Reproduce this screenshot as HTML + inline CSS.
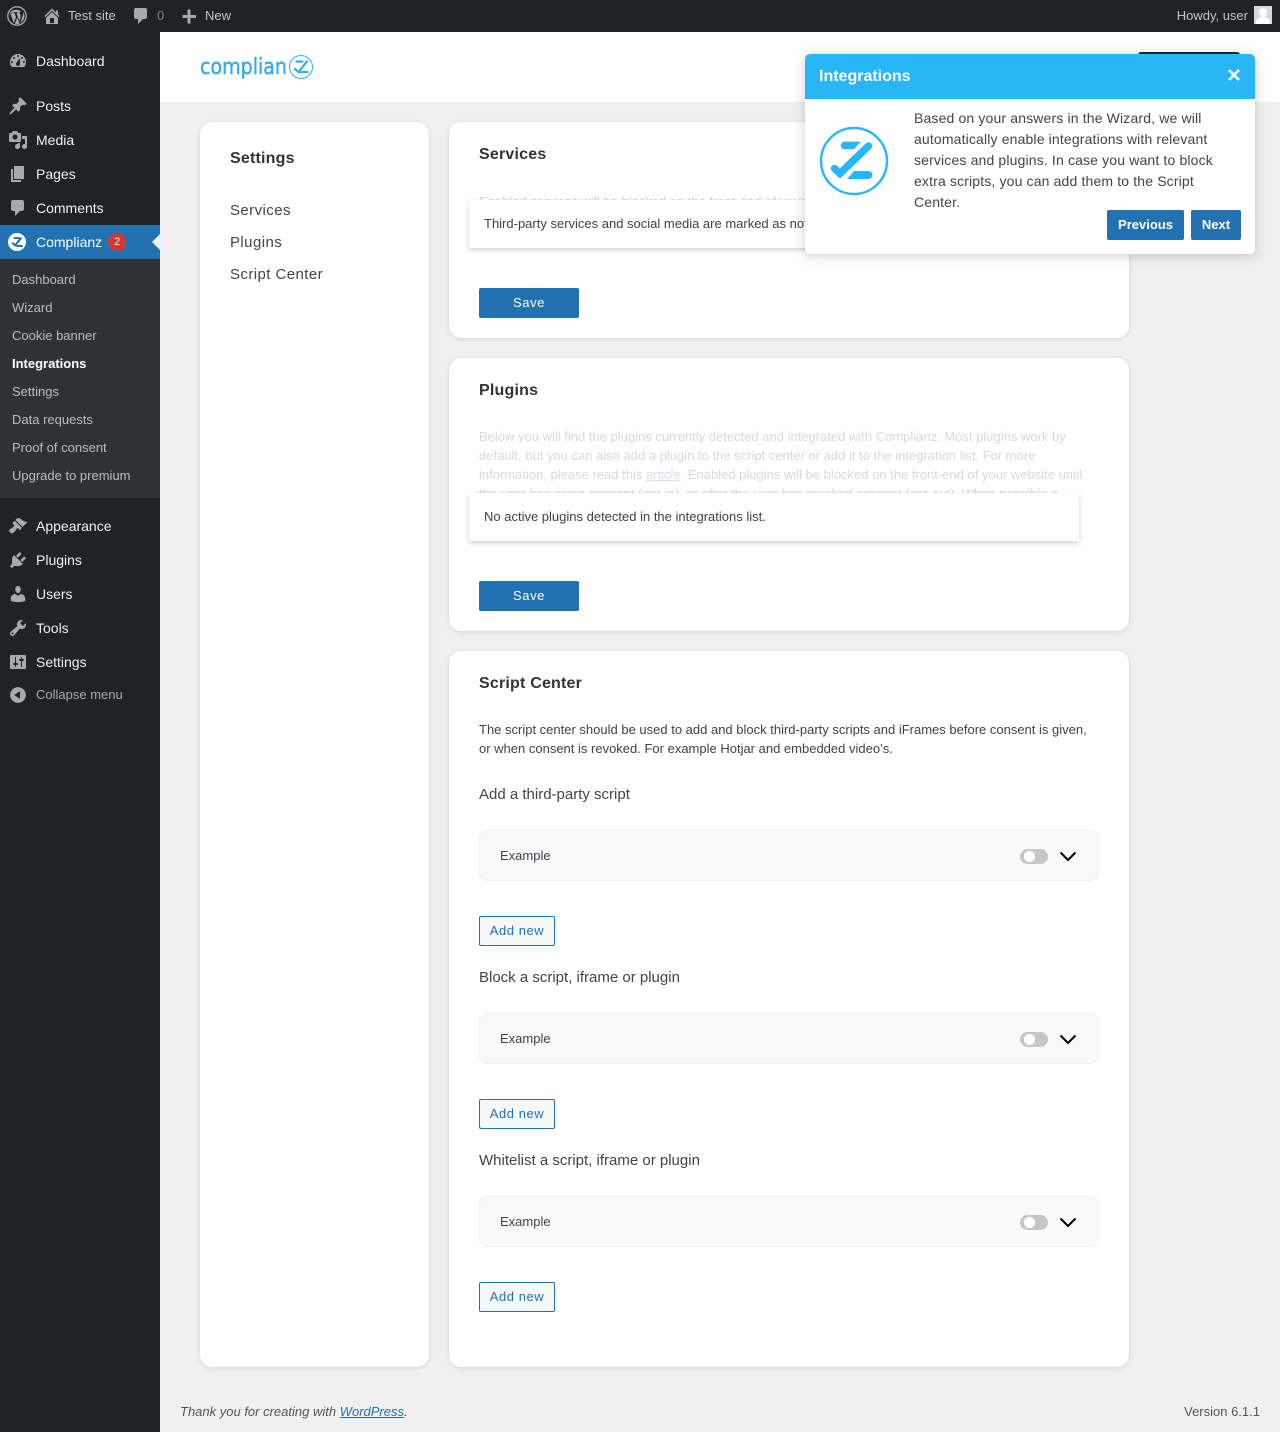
<!DOCTYPE html>
<html lang="en">
<head>
<meta charset="utf-8">
<title>Complianz Integrations</title>
<style>
*{box-sizing:border-box}
html,body{margin:0;padding:0}
body{width:1280px;height:1432px;position:relative;overflow:hidden;background:#f0f0f1;font-family:"Liberation Sans",sans-serif;font-size:13px;color:#3c434a}
.a{position:absolute;white-space:nowrap}
#bar{position:absolute;left:0;top:0;width:1280px;height:32px;background:#1d2327;z-index:5}
#bar .a{color:#c3c4c7;font-size:13px;line-height:32px;top:0}
#side{position:absolute;left:0;top:32px;width:160px;height:1400px;background:#1d2327}
.m{position:absolute;left:36px;color:#f0f0f1;font-size:14px;line-height:18px;white-space:nowrap}
.s{position:absolute;left:12px;color:rgba(240,246,252,.7);font-size:13px;line-height:18px;white-space:nowrap}
.ic{position:absolute;left:8px;width:20px;height:20px;fill:#a7aaad}
.card{position:absolute;background:#fff;border-radius:12px;box-shadow:0 1px 5px rgba(0,0,0,.12);overflow:hidden}
.h{position:absolute;font-size:16px;font-weight:700;color:#333;line-height:20px;white-space:nowrap;letter-spacing:.2px}
.nav{position:absolute;left:230px;font-size:15px;letter-spacing:.42px;color:#444;line-height:20px;z-index:1}
.p{position:absolute;font-size:13px;line-height:19px;white-space:nowrap}
.save{position:absolute;left:30px;width:100px;height:30px;border-radius:2px;background:#2271b1;color:#fff;font-size:13px;letter-spacing:.6px;line-height:30px;text-align:center}
.notice{position:absolute;left:20px;width:610px;height:48px;background:#fff;box-shadow:0 2px 5px rgba(0,0,0,.18);font-size:13px;line-height:48px;padding-left:15px;color:#3c434a;white-space:nowrap;overflow:hidden}
.sub{position:absolute;left:30px;font-size:15px;line-height:20px;color:#444;white-space:nowrap}
.row{position:absolute;left:30px;width:620px;height:51px;background:#f9f9f9;border:1px solid #f2f2f2;border-radius:8px}
.row span{position:absolute;left:20px;top:16px;font-size:13px;line-height:18px;color:#3c434a}
.tg{position:absolute;left:540px;top:18px;width:28px;height:15px;border-radius:8px;background:#c6c6c6}
.tg i{position:absolute;left:4px;top:2px;width:11px;height:11px;border-radius:50%;background:#fff}
.row svg{position:absolute;left:579px;top:20px;width:18px;height:11px}
.add{position:absolute;left:30px;width:76px;height:30px;border:1px solid #2271b1;border-radius:2px;background:#f6f7f7;color:#2271b1;font-size:13px;letter-spacing:.55px;line-height:28px;text-align:center}
#tour{position:absolute;left:805px;top:54px;width:450px;height:200px;background:#fff;border-radius:5px;box-shadow:0 2px 12px rgba(0,0,0,.2);z-index:4}
#tour .top{position:absolute;left:0;top:0;width:450px;height:45px;background:#29b6f6;border-radius:5px 5px 0 0;color:#fff;font-size:16px;font-weight:700;line-height:44px;padding-left:14px;padding-top:1px}
#tour .txt{position:absolute;left:109px;top:54px;width:325px;font-size:14px;line-height:21px;color:#444;letter-spacing:.15px}
.btn{position:absolute;top:156px;height:30px;background:#2271b1;color:#fff;font-size:13px;font-weight:700;line-height:30px;text-align:center;border-radius:2px}
</style>
</head>
<body>

<div id="bar">
  <svg style="position:absolute;left:7px;top:6px" width="20" height="20" viewBox="0 0 20 20"><circle cx="10" cy="10" r="9.2" fill="none" stroke="#a7aaad" stroke-width="1.3"/><path fill="#a7aaad" d="M3.2 7.2l3.6 9.9 2.2-6.2-1.5-3.9-1.1-.1v-.8h4.3v.8l-1.1.1 2.8 8.1.9-3c.7-2 .3-3-.3-4-.4-.6-.6-1.2-.1-2 .3-.4.7-.6 1.2-.6-1.5-1.200-3.200-1.800-5.100-1.700-2.700.1-4.900 1.400-6.300 3.400h2.400v.8l-2.700.2zM10.200 11.500l-2.300 6.300c.7.2 1.500.3 2.200.3.900 0 1.700-.2 2.500-.4zM16.300 6.200c.1 1.400-.2 2.600-.6 3.700l-2.300 6.800c2.600-1.500 4.300-4.500 4-7.500-.1-1.100-.5-2.100-1.100-3z"/></svg>
  <svg style="position:absolute;left:42px;top:6px" width="20" height="20" viewBox="0 0 20 20" fill="#a7aaad"><path fill-rule="evenodd" d="M16 8.500l1.530 1.530-1.060 1.060L10 4.620l-6.470 6.470-1.060-1.060L10 2.500l4 4v-2h2v4zM10 6.040l6 5.990V18H4v-5.970zM12 17v-5H8v5h4z"/></svg>
  <div class="a" style="left:68px">Test site</div>
  <svg style="position:absolute;left:131px;top:6px" width="20" height="20" viewBox="0 0 20 20" fill="#a7aaad"><path d="M5 2h9c1.100 0 2 .9 2 2v7c0 1.100-.9 2-2 2h-2l-5 5v-5H5c-1.100 0-2-.9-2-2V4c0-1.100.9-2 2-2z"/></svg>
  <div class="a" style="left:157px;color:#7e8288">0</div>
  <svg style="position:absolute;left:179px;top:6px" width="20" height="20" viewBox="0 0 20 20" fill="#a7aaad"><path d="M17 9v3h-5.500v5.500h-3V12H3.500V9h5V3.500h3V9z"/></svg>
  <div class="a" style="left:205px">New</div>
  <div class="a" style="right:32px">Howdy, user</div>
  <div style="position:absolute;left:1254px;top:6px;width:18px;height:18px;background:#d8d8d8;overflow:hidden"><div style="position:absolute;left:5px;top:2px;width:8px;height:9px;border-radius:50%;background:#fff"></div><div style="position:absolute;left:2px;top:11px;width:14px;height:9px;border-radius:6px 6px 0 0;background:#fff"></div></div>
</div>

<div id="side">
  <svg class="ic" style="top:19px" viewBox="0 0 20 20"><path fill-rule="evenodd" d="M3.760 16h12.480c1.100-1.370 1.760-3.110 1.760-5 0-4.420-3.580-8-8-8s-8 3.580-8 8c0 1.890.66 3.630 1.760 5zM10 4c.55 0 1 .45 1 1s-.45 1-1 1-1-.45-1-1 .45-1 1-1zM6 6c.55 0 1 .45 1 1s-.45 1-1 1-1-.45-1-1 .45-1 1-1zm8 0c.55 0 1 .45 1 1s-.45 1-1 1-1-.45-1-1 .45-1 1-1zm-5.370 5.550L12 7v6c0 1.100-.9 2-2 2s-2-.9-2-2c0-.57.24-1.080.63-1.450zM4 10c.55 0 1 .45 1 1s-.45 1-1 1-1-.45-1-1 .45-1 1-1zm12 0c.55 0 1 .45 1 1s-.45 1-1 1-1-.45-1-1 .45-1 1-1z"/></svg>
  <div class="m" style="top:20px">Dashboard</div>

  <svg class="ic" style="top:64px" viewBox="0 0 20 20"><path d="M10.440 3.020l1.820-1.820 6.360 6.350-1.830 1.820c-1.050-.68-2.480-.57-3.410.36l-.75.75c-.92.93-1.040 2.350-.35 3.410l-1.830 1.820-2.410-2.410-2.800 2.790c-.42.42-3.380 2.710-3.800 2.290s1.860-3.390 2.280-3.810l2.790-2.790L4.100 9.360l1.830-1.820c1.050.69 2.480.57 3.400-.36l.75-.75c.93-.92 1.050-2.350.36-3.410z"/></svg>
  <div class="m" style="top:65px">Posts</div>

  <svg class="ic" style="top:98px" viewBox="0 0 20 20"><path fill-rule="evenodd" d="M13 11V4c0-.55-.45-1-1-1h-1.670L9 1H5L3.670 3H2c-.55 0-1 .45-1 1v7c0 .55.45 1 1 1h10c.55 0 1-.45 1-1zM7 4.500c1.380 0 2.500 1.120 2.500 2.500S8.380 9.500 7 9.500 4.500 8.380 4.500 7 5.620 4.500 7 4.500zM14 6h5v10.500c0 1.380-1.120 2.500-2.500 2.500S14 17.880 14 16.500s1.120-2.500 2.500-2.500c.17 0 .34.02.5.05V9h-3V6zm-4 8.050V13h2v3.500c0 1.380-1.120 2.500-2.500 2.500S7 17.880 7 16.500 8.120 14 9.500 14c.17 0 .34.02.5.05z"/></svg>
  <div class="m" style="top:99px">Media</div>

  <svg class="ic" style="top:132px" viewBox="0 0 20 20"><path d="M6 15V2h10v13H6zm-1 1h8v2H3V5h2v11z"/></svg>
  <div class="m" style="top:133px">Pages</div>

  <svg class="ic" style="top:166px" viewBox="0 0 20 20"><path d="M5 2h9c1.100 0 2 .9 2 2v7c0 1.100-.9 2-2 2h-2l-5 5v-5H5c-1.100 0-2-.9-2-2V4c0-1.100.9-2 2-2z"/></svg>
  <div class="m" style="top:167px">Comments</div>

  <div style="position:absolute;left:0;top:193px;width:160px;height:34px;background:#2271b1"></div>
  <div style="position:absolute;left:152px;top:202px;width:0;height:0;border-top:8px solid transparent;border-bottom:8px solid transparent;border-right:8px solid #f0f0f1"></div>
  <svg style="position:absolute;left:8px;top:201px" width="18" height="18" viewBox="0 0 18 18"><circle cx="9" cy="9" r="9" fill="#fff"/><path d="M6.500 5h4.500M13 5.300L7 12.300 4.800 10.300M9 13h5" fill="none" stroke="#2271b1" stroke-width="2" stroke-linecap="round"/></svg>
  <div class="m" style="top:201px;color:#fff">Complianz</div>
  <div style="position:absolute;left:108px;top:201px;width:18px;height:18px;border-radius:50%;background:#d63638;color:#fff;font-size:11px;line-height:18px;text-align:center">2</div>

  <div style="position:absolute;left:0;top:227px;width:160px;height:239px;background:#2c3338"></div>
  <div class="s" style="top:239px">Dashboard</div>
  <div class="s" style="top:267px">Wizard</div>
  <div class="s" style="top:295px">Cookie banner</div>
  <div class="s" style="top:323px;color:#fff;font-weight:700">Integrations</div>
  <div class="s" style="top:351px">Settings</div>
  <div class="s" style="top:379px">Data requests</div>
  <div class="s" style="top:407px">Proof of consent</div>
  <div class="s" style="top:435px">Upgrade to premium</div>

  <svg class="ic" style="top:484px" viewBox="0 0 20 20"><path d="M14.480 11.060L7.410 3.990l1.500-1.500c.5-.56 2.300-.47 3.510.32 1.210.8 1.430 1.280 2.910 2.100 1.180.64 2.450 1.260 4.450.85zm-.71.71L6.700 4.700 4.930 6.470c-.39.39-.39 1.020 0 1.410l1.060 1.060c.39.39.39 1.030 0 1.420-.6.6-1.430 1.110-2.210 1.690-.35.26-.7.53-1.010.84C1.430 13.230.4 14.840 2.010 16.450c1.600 1.600 3.210.57 4.560-.77.31-.31.58-.66.84-1.010.58-.78 1.090-1.610 1.690-2.210.39-.39 1.020-.39 1.410 0l1.060 1.060c.39.39 1.020.39 1.410 0z"/></svg>
  <div class="m" style="top:485px">Appearance</div>

  <svg class="ic" style="top:518px" viewBox="0 0 20 20"><path d="M13.110 4.360L9.870 7.600 8 5.730l3.240-3.240c.35-.34 1.050-.2 1.560.32.52.51.66 1.210.31 1.550zm-8 1.770l.91-1.120 9.010 9.010-1.190.84c-.71.71-2.630 1.160-3.820 1.160H6.140L4.900 17.260c-.59.59-1.540.59-2.120 0-.59-.58-.59-1.530 0-2.120l1.240-1.240v-3.880c0-1.130.4-3.190 1.090-3.890zm7.260 3.970l3.240-3.240c.34-.35 1.040-.21 1.550.31.52.51.66 1.210.31 1.550l-3.240 3.250z"/></svg>
  <div class="m" style="top:519px">Plugins</div>

  <svg class="ic" style="top:552px" viewBox="0 0 20 20"><path d="M10 9.250c-2.270 0-2.730-3.440-2.730-3.440C7 4.020 7.820 2 9.970 2c2.160 0 2.980 2.020 2.710 3.810 0 0-.41 3.440-2.680 3.440zm0 2.570L12.720 10c2.390 0 4.520 2.330 4.520 4.530v2.490s-3.650 1.130-7.240 1.130c-3.650 0-7.240-1.130-7.240-1.130v-2.490c0-2.250 1.940-4.480 4.470-4.480z"/></svg>
  <div class="m" style="top:553px">Users</div>

  <svg class="ic" style="top:586px" viewBox="0 0 20 20"><path fill-rule="evenodd" d="M16.680 9.770c-1.340 1.340-3.300 1.670-4.950.99l-5.410 6.520c-.99.99-2.590.99-3.580 0s-.99-2.590 0-3.570l6.520-5.420c-.68-1.650-.35-3.610.99-4.950 1.280-1.280 3.120-1.620 4.720-1.060l-2.890 2.890 2.820 2.820 2.860-2.870c.53 1.580.18 3.390-1.080 4.650zM3.810 16.210c.4.39 1.040.39 1.430 0 .4-.4.4-1.040 0-1.430-.39-.4-1.030-.4-1.430 0-.39.39-.39 1.030 0 1.430z"/></svg>
  <div class="m" style="top:587px">Tools</div>

  <svg class="ic" style="top:620px" viewBox="0 0 20 20"><path fill-rule="evenodd" d="M18 16V4c0-.55-.45-1-1-1H3c-.55 0-1 .45-1 1v12c0 .55.45 1 1 1h14c.55 0 1-.45 1-1zM8 11h1c.55 0 1 .45 1 1s-.45 1-1 1H8v1.500c0 .28-.22.5-.5.5s-.5-.22-.5-.5V13H6c-.55 0-1-.45-1-1s.45-1 1-1h1V5.500c0-.28.22-.5.5-.5s.5.22.5.5V11zm5-2h-1c-.55 0-1-.45-1-1s.45-1 1-1h1V5.500c0-.28.22-.5.5-.5s.5.22.5.5V7h1c.55 0 1 .45 1 1s-.45 1-1 1h-1v5.500c0 .28-.22.5-.5.5s-.5-.22-.5-.5V9z"/></svg>
  <div class="m" style="top:621px">Settings</div>

  <svg class="ic" style="top:653px" viewBox="0 0 20 20"><path fill-rule="evenodd" d="M10 2.160c4.330 0 7.840 3.510 7.840 7.840s-3.510 7.840-7.840 7.840S2.160 14.330 2.160 10 5.710 2.160 10 2.160zm2 11.720V6.120L6.180 9.970z"/></svg>
  <div class="m" style="top:654px;font-size:13px;color:#a7aaad">Collapse menu</div>
</div>

<div style="position:absolute;left:160px;top:32px;width:1120px;height:70px;background:#fff"></div>
<div style="position:absolute;left:1138px;top:52px;width:102px;height:30px;background:#1d2327;border-radius:3px"></div>
<svg style="position:absolute;left:198px;top:50px" width="118" height="34" viewBox="0 0 118 34">
  <text x="2" y="24" font-family="'DejaVu Sans',sans-serif" font-size="22" fill="#37ade6" stroke="#37ade6" stroke-width=".5" textLength="87" lengthAdjust="spacingAndGlyphs">complian</text>
  <circle cx="103" cy="17" r="11.500" fill="none" stroke="#37ade6" stroke-width="1"/>
  <path d="M98.500 11.500h6M109 11.500L100.500 22 97 19M102.500 22h7" fill="none" stroke="#37ade6" stroke-width="2.200" stroke-linecap="round"/>
</svg>

<div class="card" style="left:200px;top:122px;width:229px;height:1245px"></div>
<div class="h" style="left:230px;top:149px;z-index:1">Settings</div>
<div class="nav" style="top:201px">Services</div>
<div class="nav" style="top:233px">Plugins</div>
<div class="nav" style="top:265px">Script Center</div>

<div class="card" style="left:449px;top:122px;width:680px;height:216px">
  <div class="h" style="left:30px;top:23px">Services</div>
  <div class="p" style="left:30px;top:70px;color:#3c434a;opacity:.2">Enabled services will be blocked on the front-end of your website until the user has given consent</div>
  <div class="notice" style="top:78px">Third-party services and social media are marked as not</div>
  <div class="save" style="top:166px">Save</div>
</div>

<div class="card" style="left:449px;top:358px;width:680px;height:273px">
  <div class="h" style="left:30px;top:23px">Plugins</div>
  <div class="p" style="left:30px;top:69px;color:#3c434a;opacity:.2">Below you will find the plugins currently detected and integrated with Complianz. Most plugins work by<br>default, but you can also add a plugin to the script center or add it to the integration list. For more<br>information, please read this <span style="color:#2271b1;text-decoration:underline">article</span>. Enabled plugins will be blocked on the front-end of your website until<br>the user has given consent (opt-in), or after the user has revoked consent (opt-out). When possible a</div>
  <div class="notice" style="top:135px">No active plugins detected in the integrations list.</div>
  <div class="save" style="top:223px">Save</div>
</div>

<div class="card" style="left:449px;top:651px;width:680px;height:716px">
  <div class="h" style="left:30px;top:23px">Script Center</div>
  <div class="p" style="left:30px;top:69px">The script center should be used to add and block third-party scripts and iFrames before consent is given,<br>or when consent is revoked. For example Hotjar and embedded video’s.</div>

  <div class="sub" style="top:134px">Add a third-party script</div>
  <div class="row" style="top:179px"><span>Example</span><div class="tg"><i></i></div><svg viewBox="0 0 18 11"><path d="M1.500 1.500L9 9l7.500-7.500" fill="none" stroke="#000" stroke-width="2"/></svg></div>
  <div class="add" style="top:265px">Add new</div>

  <div class="sub" style="top:317px">Block a script, iframe or plugin</div>
  <div class="row" style="top:362px"><span>Example</span><div class="tg"><i></i></div><svg viewBox="0 0 18 11"><path d="M1.500 1.500L9 9l7.500-7.500" fill="none" stroke="#000" stroke-width="2"/></svg></div>
  <div class="add" style="top:448px">Add new</div>

  <div class="sub" style="top:500px">Whitelist a script, iframe or plugin</div>
  <div class="row" style="top:545px"><span>Example</span><div class="tg"><i></i></div><svg viewBox="0 0 18 11"><path d="M1.500 1.500L9 9l7.500-7.500" fill="none" stroke="#000" stroke-width="2"/></svg></div>
  <div class="add" style="top:631px">Add new</div>
</div>

<div style="position:absolute;left:789px;top:139px;width:0;height:0;border-top:16px solid transparent;border-bottom:16px solid transparent;border-right:16px solid #fff;z-index:4"></div>
<div id="tour">
  <div class="top">Integrations</div>
  <svg style="position:absolute;left:422px;top:14px" width="14" height="14" viewBox="0 0 14 14"><path d="M2 2l10 10M12 2L2 12" stroke="#fff" stroke-width="2.600" fill="none"/></svg>
  <svg style="position:absolute;left:14px;top:72px" width="70" height="70" viewBox="0 0 70 70">
    <circle cx="35" cy="35" r="33" fill="none" stroke="#29b6f6" stroke-width="2.400"/>
    <path d="M25.500 15.600h16.500l-7 7.700h-9.500a3.850 3.850 0 0 1 0-7.700z" fill="#29b6f6"/>
    <path d="M49.500 20L21 47.500 15.500 42.500" stroke="#29b6f6" stroke-width="7.500" stroke-linecap="round" fill="none"/>
    <path d="M28 53l7-8h14.500a4 4 0 0 1 0 8z" fill="#29b6f6"/>
  </svg>
  <div class="txt">Based on your answers in the Wizard, we will automatically enable integrations with relevant services and plugins. In case you want to block extra scripts, you can add them to the Script Center.</div>
  <div class="btn" style="left:302px;width:77px">Previous</div>
  <div class="btn" style="left:386px;width:50px">Next</div>
</div>

<div class="a" style="left:180px;top:1403px;font-style:italic;font-size:13px;line-height:18px;color:#50575e">Thank you for creating with <span style="color:#2271b1;text-decoration:underline">WordPress</span>.</div>
<div class="a" style="right:20px;top:1403px;font-size:13px;line-height:18px;color:#50575e">Version 6.1.1</div>

</body>
</html>
